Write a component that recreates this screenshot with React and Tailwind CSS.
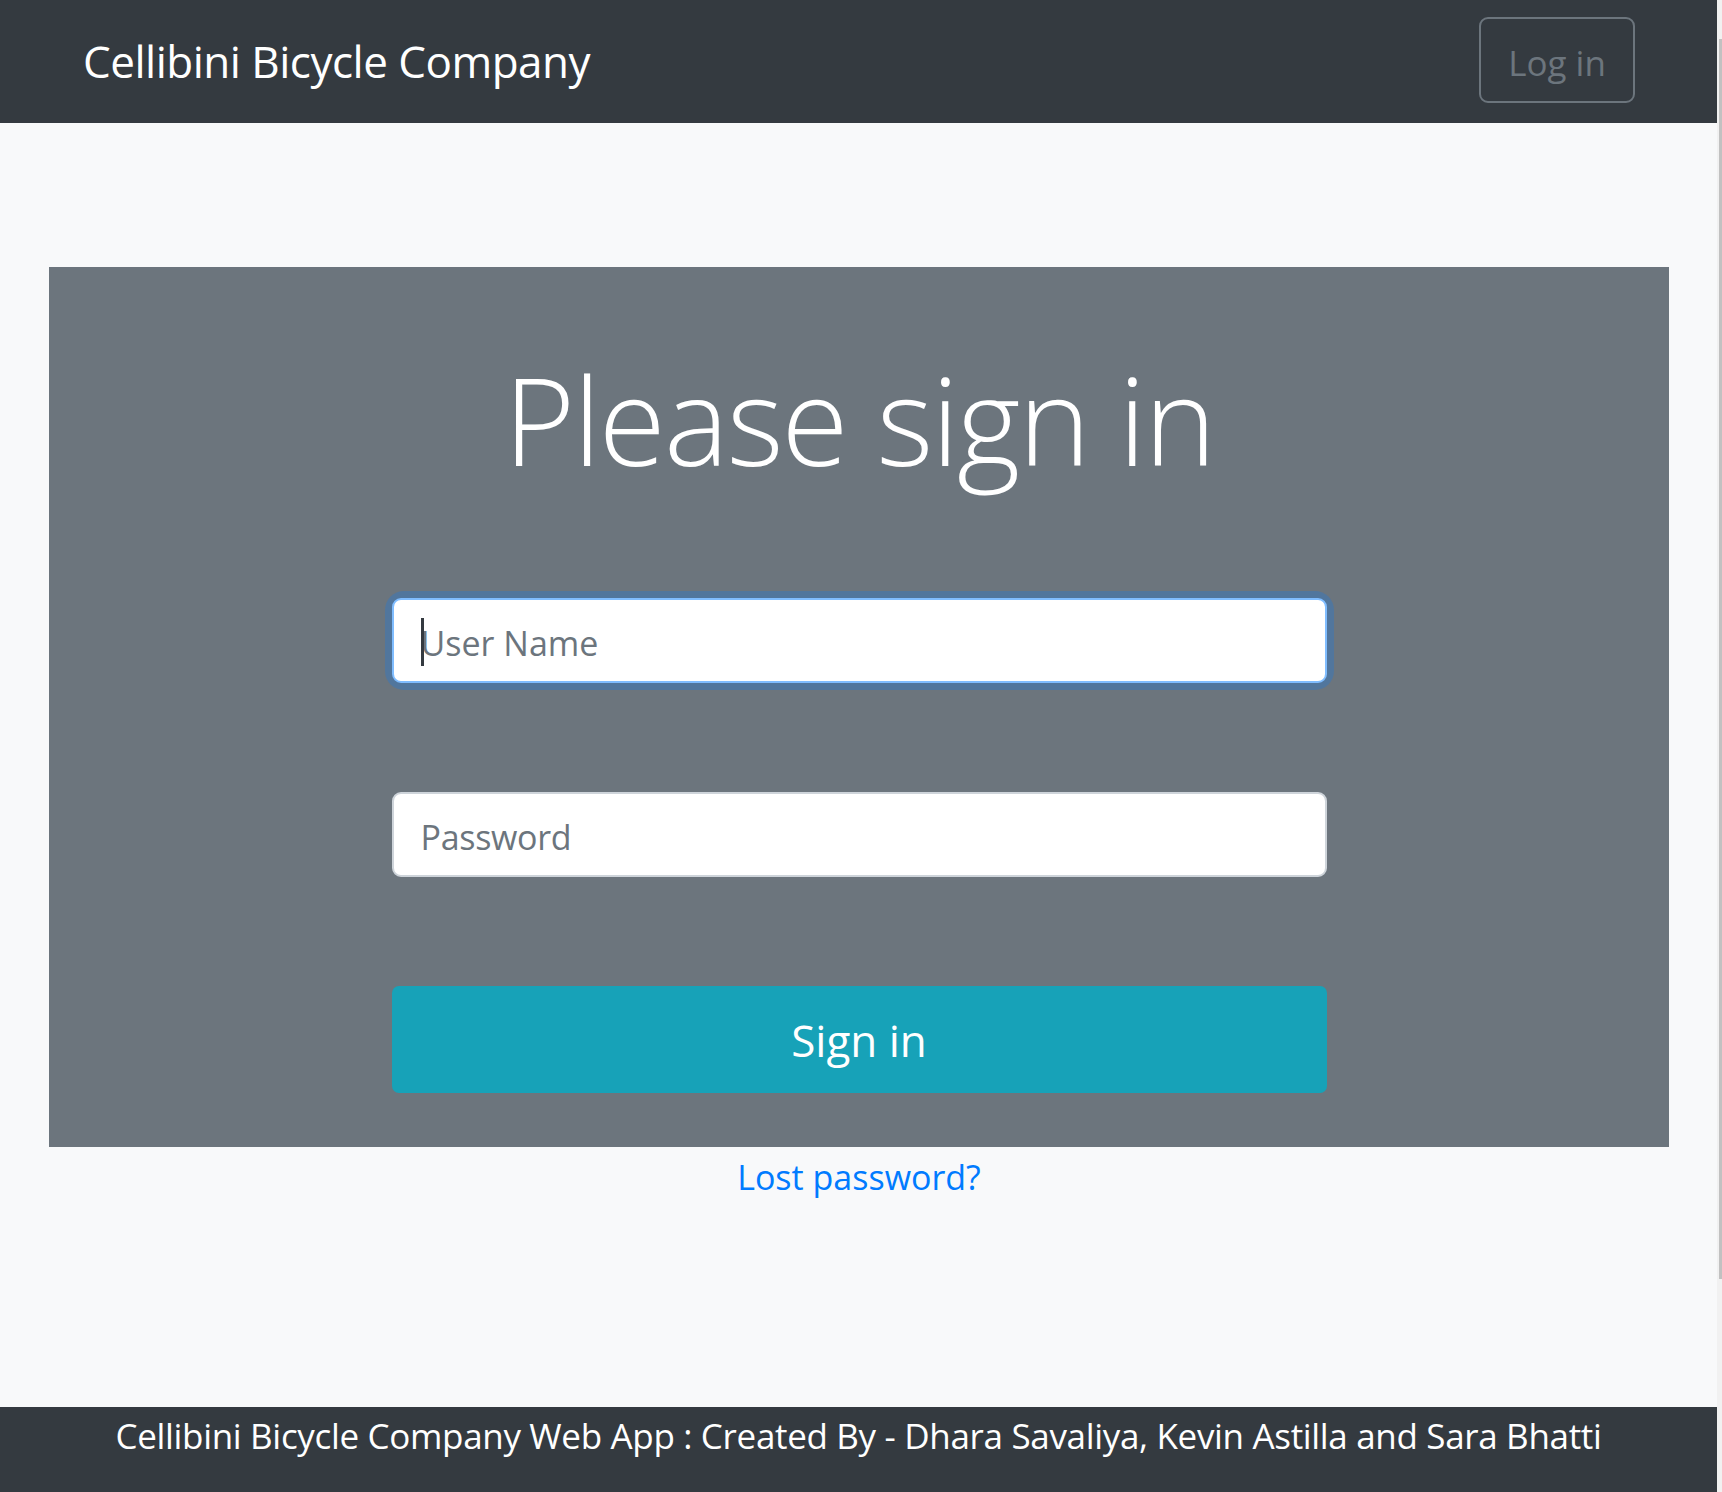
import { useState } from "react";

const font = { fontFamily: '"Open Sans", "Noto Sans", sans-serif' };

function Navbar() {
  return (
    <nav className="h-[123px] shrink-0 bg-[#343a40] flex items-center justify-between pl-[83px] pr-[82px]">
      <a href="#" className="text-white text-[44px] leading-none tracking-[-0.5px] -mt-[2px]">
        Cellibini Bicycle Company
      </a>
      <button className="w-[156px] h-[86px] -mt-[3px] pt-[4px] border-2 border-[#6c757d] rounded-[9px] text-[#6c757d] text-[35px] leading-none">
        Log in
      </button>
    </nav>
  );
}

function Footer() {
  return (
    <footer className="h-[85px] shrink-0 bg-[#343a40] text-center pt-[2px]">
      <p className="text-white text-[35px] leading-[54px] tracking-[-0.33px]">
        Cellibini Bicycle Company Web App : Created By - Dhara Savaliya, Kevin Astilla and Sara Bhatti
      </p>
    </footer>
  );
}

export default function App() {
  const [username, setUsername] = useState("");
  const [password, setPassword] = useState("");

  return (
    <div className="h-[1492px] flex bg-[#f1f1f1] overflow-hidden" style={font}>
      <div className="flex-1 flex flex-col bg-[#f8f9fa]">
        <Navbar />

        {/* Sign in card */}
        <main className="flex-1 pt-[144px] pl-[49px] pr-[48px]">
          <div className="h-[880px] bg-[#6c757d] flex flex-col items-center">
            <h1 className="mt-[77px] text-white text-[122px] font-light leading-[150px] tracking-[-1.9px]">
              Please sign in
            </h1>

            <form className="w-[935px] mt-[104px]" onSubmit={(e) => e.preventDefault()}>
              <div className="relative rounded-[12px] shadow-[0_0_0_7px_rgba(0,123,255,0.25)]">
                <input
                  type="text"
                  value={username}
                  onChange={(e) => setUsername(e.target.value)}
                  placeholder="User Name"
                  className="w-full h-[85px] pt-[4px] bg-white border-2 border-[#80bdff] rounded-[9px] pl-[27px] text-[34px] text-[#495057] placeholder:text-[#6c757d] outline-none caret-transparent"
                />
                <span className="absolute left-[29px] top-[20px] w-[3px] h-[48px] bg-[#343a40]" />
              </div>

              <input
                type="password"
                value={password}
                onChange={(e) => setPassword(e.target.value)}
                placeholder="Password"
                className="block w-full h-[85px] pt-[4px] mt-[109px] bg-white border-2 border-[#ced4da] rounded-[9px] pl-[27px] text-[34px] tracking-[-0.3px] text-[#495057] placeholder:text-[#6c757d] outline-none"
              />

              <button
                type="submit"
                className="w-full h-[107px] mt-[109px] bg-[#17a2b8] rounded-[7px] text-white text-[44px] leading-none"
              >
                Sign in
              </button>
            </form>
          </div>

          <p className="text-center mt-[3px]">
            <a href="#" className="text-[#007bff] text-[34px] leading-[54px]">
              Lost password?
            </a>
          </p>
        </main>

        <Footer />
      </div>

      {/* scrollbar */}
      <div className="w-[5px] shrink-0 flex flex-col">
        <div className="h-[39px]" />
        <div className="h-[1240px] ml-[2px] bg-[#c1c1c1]" />
      </div>
    </div>
  );
}
